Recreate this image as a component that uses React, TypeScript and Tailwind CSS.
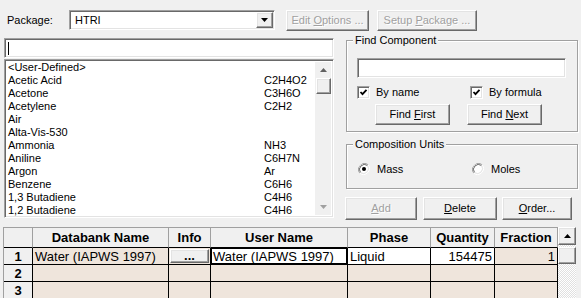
import React from "react";

const sunken =
  "border border-t-[#a0a0a0] border-l-[#a0a0a0] border-r-white border-b-white shadow-[inset_1px_1px_0_#696969,inset_-1px_-1px_0_#e3e3e3]";
const raised =
  "border border-t-white border-l-white border-r-[#696969] border-b-[#696969] shadow-[inset_-1px_-1px_0_#a0a0a0,inset_1px_1px_0_#e3e3e3] bg-[#f0f0f0]";
const etched =
  "border border-[#a0a0a0] shadow-[inset_1px_1px_0_#ffffff,1px_1px_0_#ffffff]";
const disabledText = "text-[#a0a0a0] [text-shadow:1px_1px_0_#ffffff]";

const items: [string, string][] = [
  ["<User-Defined>", ""],
  ["Acetic Acid", "C2H4O2"],
  ["Acetone", "C3H6O"],
  ["Acetylene", "C2H2"],
  ["Air", ""],
  ["Alta-Vis-530", ""],
  ["Ammonia", "NH3"],
  ["Aniline", "C6H7N"],
  ["Argon", "Ar"],
  ["Benzene", "C6H6"],
  ["1,3 Butadiene", "C4H6"],
  ["1,2 Butadiene", "C4H6"],
];

function Check() {
  return (
    <div className={`w-[13px] h-[13px] bg-white ${sunken} flex items-center justify-center`}>
      <svg width="9" height="9" viewBox="0 0 9 9">
        <path d="M1.5 4 L3.5 6.2 L7.5 1.8" stroke="#000" strokeWidth="1.8" fill="none" />
      </svg>
    </div>
  );
}

function Radio({ on }: { on?: boolean }) {
  return (
    <svg width="12" height="12" viewBox="0 0 12 12">
      <path d="M10.2 1.8 A6 6 0 0 0 1.8 10.2" stroke="#a0a0a0" strokeWidth="1" fill="none" />
      <path d="M1.8 10.2 A6 6 0 0 0 10.2 1.8" stroke="#ffffff" strokeWidth="1" fill="none" />
      <circle cx="6" cy="6" r="5" fill="#ffffff" />
      <path d="M9.5 2.5 A5 5 0 0 0 2.5 9.5" stroke="#696969" strokeWidth="1" fill="none" />
      <path d="M2.5 9.5 A5 5 0 0 0 9.5 2.5" stroke="#e3e3e3" strokeWidth="1" fill="none" />
      {on && <circle cx="6" cy="6" r="2" fill="#000" />}
    </svg>
  );
}

const hdr = "border-r border-r-[#a0a0a0] border-b border-b-black flex items-center justify-center font-bold bg-[#f0f0f0]";
const beige = "bg-[#efe5dc] border-r border-b border-black";
const rowHd = "bg-[#f0f0f0] border-r border-b border-black flex items-center justify-center font-bold";

export default function App() {
  return (
    <div className="w-[581px] h-[298px] bg-[#f0f0f0] overflow-hidden flex flex-col font-['Liberation_Sans',Arial,sans-serif] text-[11px] text-black leading-none">
      {/* Top row */}
      <div className="flex items-center h-[20px] mt-[10px] ml-[7px]">
        <div className="w-[62px]">Package:</div>
        <div className={`w-[206px] h-[20px] bg-white ${sunken} flex items-center`}>
          <span className="ml-[5px] flex-1">HTRI</span>
          <div className={`w-[17px] h-[16px] mr-[1px] ${raised} flex items-center justify-center`}>
            <svg width="7" height="4" viewBox="0 0 7 4"><path d="M0 0 H7 L3.5 4 Z" fill="#000" /></svg>
          </div>
        </div>
        <div className={`ml-[11px] w-[83px] h-[21px] ${raised} flex items-center justify-center ${disabledText}`}>
          <span>Edit <u>O</u>ptions ...</span>
        </div>
        <div className={`ml-[8px] w-[100px] h-[21px] ${raised} flex items-center justify-center ${disabledText}`}>
          <span>Setup <u>P</u>ackage ...</span>
        </div>
      </div>

      {/* Body */}
      <div className="flex mt-[8px] ml-[4px]">
        {/* Left */}
        <div className="w-[330px] flex flex-col">
          <div className={`h-[20px] bg-white ${sunken} flex items-center`}>
            <div className="ml-[3px] w-px h-[13px] bg-black" />
          </div>
          <div className={`mt-[1px] h-[159px] bg-white ${sunken} flex`}>
            <div className="flex-1 pt-[1px] pl-[3px]">
              {items.map(([n, f], i) => (
                <div key={i} className="h-[13px] flex items-center">
                  <span className="w-[256px]">{n}</span>
                  <span>{f}</span>
                </div>
              ))}
            </div>
            <div className="w-[16px] mt-[2px] mb-[2px] mr-[2px] bg-[#f0f0f0] flex flex-col items-center">
              <div className="h-[16px] flex items-center justify-center">
                <svg width="7" height="4" viewBox="0 0 7 4"><path d="M0 4 H7 L3.5 0 Z" fill="#606060" /></svg>
              </div>
              <div className={`w-[15px] h-[16px] ${raised}`} />
              <div className="flex-1" />
              <div className="h-[16px] flex items-center justify-center">
                <svg width="7" height="4" viewBox="0 0 7 4"><path d="M0 0 H7 L3.5 4 Z" fill="#a0a0a0" /></svg>
              </div>
            </div>
          </div>
        </div>

        {/* Right */}
        <div className="ml-[11px] w-[233px] flex flex-col">
          <div className={`relative mt-[2px] ml-[1px] h-[92px] ${etched} flex flex-col`}>
            <span className="absolute left-[6px] top-[-6px] px-[2px] bg-[#f0f0f0]">Find Component</span>
            <div className={`mt-[17px] ml-[10px] w-[209px] h-[20px] bg-white ${sunken}`} />
            <div className="flex mt-[8px] ml-[10px] items-center">
              <Check />
              <span className="ml-[6px] w-[94px]">By name</span>
              <Check />
              <span className="ml-[6px]">By formula</span>
            </div>
            <div className="flex mt-[5px] ml-[28px]">
              <div className={`w-[75px] h-[21px] ${raised} flex items-center justify-center`}>
                <span>Find <u>F</u>irst</span>
              </div>
              <div className={`ml-[17px] w-[75px] h-[21px] ${raised} flex items-center justify-center`}>
                <span>Find <u>N</u>ext</span>
              </div>
            </div>
          </div>

          <div className={`relative mt-[12px] ml-[1px] h-[45px] ${etched} flex items-center`}>
            <span className="absolute left-[6px] top-[-6px] px-[2px] bg-[#f0f0f0]">Composition Units</span>
            <div className="flex items-center ml-[11px] mt-[5px]">
              <Radio on />
              <span className="ml-[7px] w-[95px]">Mass</span>
              <Radio />
              <span className="ml-[7px]">Moles</span>
            </div>
          </div>

          <div className="flex mt-[8px]">
            <div className={`w-[72px] h-[23px] ${raised} flex items-center justify-center ${disabledText}`}>
              <span><u>A</u>dd</span>
            </div>
            <div className={`ml-[6px] w-[74px] h-[23px] ${raised} flex items-center justify-center`}>
              <span><u>D</u>elete</span>
            </div>
            <div className={`ml-[5px] w-[70px] h-[23px] ${raised} flex items-center justify-center`}>
              <span><u>O</u>rder...</span>
            </div>
          </div>
        </div>
      </div>

      {/* Grid */}
      <div className="flex mt-[7px] ml-[3px] text-[13px]">
        <div className="border-l border-t border-[#a0a0a0] grid grid-cols-[29px_136px_42px_137px_83px_64px_63px] grid-rows-[20px_17px_17px_17px_17px]">
          <div className={hdr} />
          <div className={hdr}>Databank Name</div>
          <div className={hdr}>Info</div>
          <div className={hdr}>User Name</div>
          <div className={hdr}>Phase</div>
          <div className={hdr}>Quantity</div>
          <div className={hdr}>Fraction</div>

          <div className={rowHd}>1</div>
          <div className={`${beige} flex items-center pl-[2px]`}>Water (IAPWS 1997)</div>
          <div className={`${beige} p-[1px]`}>
            <div className={`h-full ${raised} flex items-center justify-center font-bold leading-none pb-[2px]`}>...</div>
          </div>
          <div className="bg-white border-r border-b border-black flex items-center pl-[2px] shadow-[inset_1px_1px_0_#000,inset_-1px_-1px_0_#000]">Water (IAPWS 1997)</div>
          <div className="bg-white border-r border-b border-black flex items-center pl-[2px]">Liquid</div>
          <div className="bg-white border-r border-b border-black flex items-center justify-end pr-[2px]">154475</div>
          <div className={`${beige} flex items-center justify-end pr-[2px]`}>1</div>

          {[2, 3, 4].map((r) => (
            <React.Fragment key={r}>
              <div className={rowHd}>{r < 4 ? r : ""}</div>
              <div className={beige} />
              <div className={beige} />
              <div className={beige} />
              <div className={beige} />
              <div className={beige} />
              <div className={beige} />
            </React.Fragment>
          ))}
        </div>
        <div className="w-[18px] flex flex-col bg-[repeating-conic-gradient(#ffffff_0_25%,#e0e0e0_0_50%)] bg-[length:2px_2px]">
          <div className={`h-[18px] ${raised} flex items-center justify-center`}>
            <svg width="7" height="4" viewBox="0 0 7 4"><path d="M0 4 H7 L3.5 0 Z" fill="#000" /></svg>
          </div>
          <div className={`mt-[2px] h-[17px] ${raised}`} />
        </div>
      </div>
    </div>
  );
}
